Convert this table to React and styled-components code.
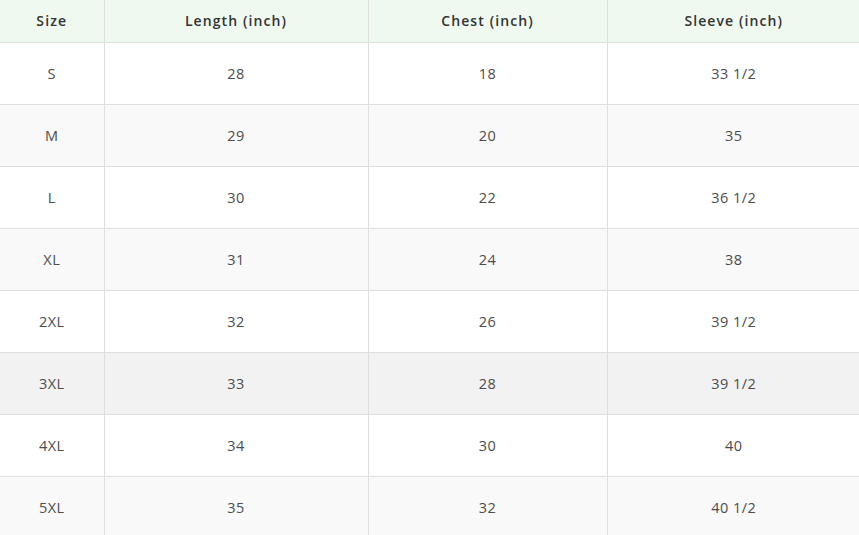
import React from "react";
import styled, { createGlobalStyle } from "styled-components";

const Global = createGlobalStyle`
  html, body { margin: 0; padding: 0; background: #fff; }
  body { font-family: "Open Sans", "Liberation Sans", sans-serif; }
`;

const Table = styled.table`
  border-collapse: collapse;
  width: 860px;
  table-layout: fixed;
  font-family: "Open Sans", "Liberation Sans", sans-serif;
`;

const Col = styled.col`
  width: ${(p) => p.$w}px;
`;

const HeadCell = styled.th`
  height: 40px;
  padding: 0 0 2px;
  background: #eff9ef;
  color: #333;
  font-size: 14px;
  font-weight: 600;
  letter-spacing: 1.1px;
  text-align: center;
  border-bottom: 1px solid #dedede;
  border-left: 1px solid #dedede;
  &:first-child { border-left: none; }
`;

const Row = styled.tr`
  background: ${(p) => (p.$hover ? "#f2f2f2" : p.$alt ? "#f9f9f9" : "#fff")};
`;

const Cell = styled.td`
  height: 61px;
  padding: 0;
  color: #4d4d4d;
  font-size: 14.5px;
  letter-spacing: 0.5px;
  text-align: center;
  border-bottom: 1px solid #dedede;
  border-left: 1px solid #dedede;
  &:first-child { border-left: none; }
`;

const rows = [
  ["S", "28", "18", "33 1/2"],
  ["M", "29", "20", "35"],
  ["L", "30", "22", "36 1/2"],
  ["XL", "31", "24", "38"],
  ["2XL", "32", "26", "39 1/2"],
  ["3XL", "33", "28", "39 1/2"],
  ["4XL", "34", "30", "40"],
  ["5XL", "35", "32", "40 1/2"],
];

export default function App() {
  return (
    <>
      <Global />
      <Table>
        <colgroup>
          <Col $w={104} />
          <Col $w={264} />
          <Col $w={239} />
          <Col $w={253} />
        </colgroup>
        <thead>
          <tr>
            <HeadCell>Size</HeadCell>
            <HeadCell>Length (inch)</HeadCell>
            <HeadCell>Chest (inch)</HeadCell>
            <HeadCell>Sleeve (inch)</HeadCell>
          </tr>
        </thead>
        <tbody>
          {rows.map((r, i) => (
            <Row key={r[0]} $alt={i % 2 === 1} $hover={i === 5}>
              {r.map((c, j) => (
                <Cell key={j}>{c}</Cell>
              ))}
            </Row>
          ))}
        </tbody>
      </Table>
    </>
  );
}
